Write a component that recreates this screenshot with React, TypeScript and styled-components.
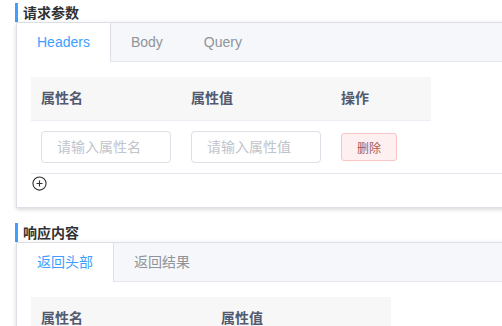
import React from 'react';
import styled, { createGlobalStyle } from 'styled-components';

const GlobalStyle = createGlobalStyle`
  body {
    margin: 0;
    overflow: hidden;
    background: #fff;
    font-family: 'Liberation Sans', 'Noto Sans CJK SC', sans-serif;
  }
`;

const Page = styled.div`
  padding: 3px 0 0 15px;
  width: 540px;
`;

const Section = styled.section`
  margin-bottom: 15px;
`;

const SectionTitle = styled.div`
  height: 19px;
  line-height: 21px;
  border-left: 3px solid #409eff;
  padding-left: 5px;
  font-size: 14px;
  font-weight: bold;
  color: #303133;
`;

const Card = styled.div`
  margin-left: 1px;
  border: 1px solid #dcdfe6;
  background: #fff;
  box-shadow: 0 2px 4px rgba(0, 0, 0, 0.12), 0 0 6px rgba(0, 0, 0, 0.04);
`;

const TabBar = styled.div`
  display: flex;
  height: 38px;
  background: #f5f7fa;
  border-bottom: 1px solid #e4e7ed;
`;

const Tab = styled.div<{ $active?: boolean }>`
  height: ${(p) => (p.$active ? '39px' : '38px')};
  line-height: 38px;
  padding: 0 20px;
  font-size: 14px;
  color: ${(p) => (p.$active ? '#409eff' : '#909399')};
  background: ${(p) => (p.$active ? '#fff' : 'transparent')};
  border-right: 1px solid ${(p) => (p.$active ? '#dcdfe6' : 'transparent')};
`;

const TabBody = styled.div`
  padding: 15px 15px 15px 14px;
`;

const Table = styled.div`
  font-size: 14px;
`;

const HeadRow = styled.div`
  display: flex;
`;

const HeadCell = styled.div<{ $w: number }>`
  width: ${(p) => p.$w}px;
  box-sizing: border-box;
  height: 44px;
  line-height: 43px;
  padding-left: 10px;
  background: #f7f7f8;
  border-bottom: 1px solid #ebeef5;
  color: #515a6e;
  font-weight: bold;
`;

const BodyRow = styled.div`
  display: flex;
  align-items: center;
  height: 52px;
  border-bottom: 1px solid #e4e4ee;
`;

const BodyCell = styled.div<{ $w: number }>`
  width: ${(p) => p.$w}px;
  box-sizing: border-box;
  padding: 0 10px;
  display: flex;
  align-items: center;
`;

const Input = styled.input`
  width: 130px;
  height: 32px;
  box-sizing: border-box;
  border: 1px solid #dcdfe6;
  border-radius: 4px;
  padding: 0 15px;
  font-size: 14px;
  font-family: inherit;
  color: #606266;
  outline: none;
  &::placeholder {
    color: #c0c4cc;
  }
`;

const DangerButton = styled.button`
  height: 28px;
  padding: 0 15px;
  font-size: 12px;
  font-family: inherit;
  color: #a8584c;
  background: #fef0f0;
  border: 1px solid #fbc4c4;
  border-radius: 3px;
`;

const AddLine = styled.div`
  height: 18px;
  display: flex;
  align-items: center;
  padding-left: 1px;
`;

const PlusIcon = () => (
  <svg width="15" height="15" viewBox="0 0 16 16" fill="none" stroke="#303133" strokeWidth="1.2">
    <circle cx="8" cy="8" r="7" />
    <path d="M8 4.8v6.4M4.8 8h6.4" />
  </svg>
);

export default function App() {
  return (
    <Page>
      <GlobalStyle />
      <Section>
        <SectionTitle>请求参数</SectionTitle>
        <Card>
          <TabBar>
            <Tab $active>Headers</Tab>
            <Tab>Body</Tab>
            <Tab>Query</Tab>
          </TabBar>
          <TabBody>
            <Table>
              <HeadRow>
                <HeadCell $w={150}>属性名</HeadCell>
                <HeadCell $w={150}>属性值</HeadCell>
                <HeadCell $w={100}>操作</HeadCell>
              </HeadRow>
              <BodyRow>
                <BodyCell $w={150}>
                  <Input placeholder="请输入属性名" />
                </BodyCell>
                <BodyCell $w={150}>
                  <Input placeholder="请输入属性值" />
                </BodyCell>
                <BodyCell $w={100}>
                  <DangerButton>删除</DangerButton>
                </BodyCell>
              </BodyRow>
            </Table>
            <AddLine>
              <PlusIcon />
            </AddLine>
          </TabBody>
        </Card>
      </Section>
      <Section>
        <SectionTitle>响应内容</SectionTitle>
        <Card>
          <TabBar>
            <Tab $active>返回头部</Tab>
            <Tab>返回结果</Tab>
          </TabBar>
          <TabBody>
            <Table>
              <HeadRow>
                <HeadCell $w={180}>属性名</HeadCell>
                <HeadCell $w={180}>属性值</HeadCell>
              </HeadRow>
            </Table>
          </TabBody>
        </Card>
      </Section>
    </Page>
  );
}
